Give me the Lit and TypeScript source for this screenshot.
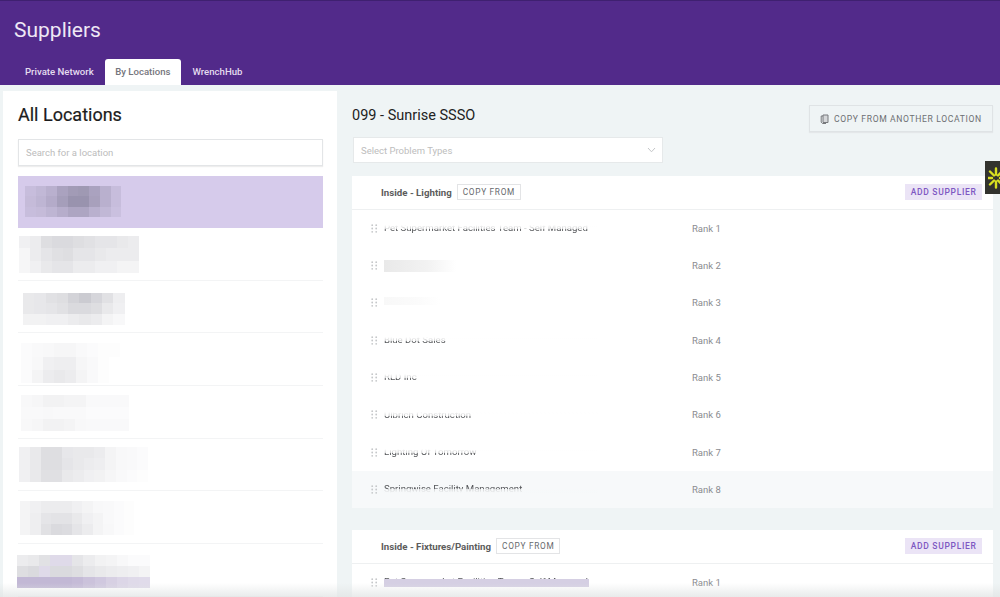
import { LitElement, html, css, svg } from "lit";
import { customElement } from "lit/decorators.js";

type Block = { left: number; top: number; cell: number; height: number; tint?: string; cells: number[][] };

const blocks: Block[] = [
  { left: 25, top: 10, cell: 10.7, height: 31, cells: [
    [.1,.14,.2,.3,.36,.38,.3,.2,.1],[.12,.16,.24,.34,.42,.42,.32,.2,.1],[.1,.12,.16,.22,.28,.28,.2,.14,.08]] },
  { left: 19, top: 8, cell: 10.9, height: 37, cells: [
    [.08,.1,.18,.2,.2,.18,.16,.14,.14,.12,.1],[.05,.1,.14,.17,.18,.14,.14,.12,.1,.1,.1],[.05,.08,.12,.14,.14,.1,.1,.08,.08,.06,.06]] },
  { left: 23, top: 12, cell: 11.3, height: 32, cells: [
    [.12,.13,.16,.18,.24,.28,.22,.16,.09],[.12,.13,.14,.16,.2,.2,.18,.12,.08],[.07,.07,.08,.08,.1,.12,.1,.06,.04]] },
  { left: 21, top: 10, cell: 11, height: 40, cells: [
    [.02,.03,.04,.05,.05,.03,.02,.01,.01],[.02,.04,.08,.09,.09,.05,.03,.01,0],[.02,.06,.1,.12,.1,.06,.03,.01,0]] },
  { left: 21, top: 9, cell: 10.8, height: 36, cells: [
    [.04,.05,.07,.07,.06,.06,.03,.03,.03,.03],[.03,.03,.04,.03,.03,.03,.02,.02,.02,.02],[.04,.05,.07,.07,.06,.04,.03,.03,.03,.03]] },
  { left: 19, top: 8, cell: 10.75, height: 35, cells: [
    [.08,.12,.18,.18,.13,.12,.12,.1,.06,.04,.03,.02],[.08,.12,.18,.18,.14,.12,.1,.09,.06,.04,.03,.02],[.08,.12,.17,.17,.12,.1,.08,.07,.05,.03,.02,.01]] },
  { left: 20, top: 10, cell: 10.4, height: 34, cells: [
    [.06,.08,.1,.1,.1,.08,.06,.04,.03,.02,.01,0],[.06,.09,.14,.15,.15,.12,.08,.06,.03,.02,.01,0],[.06,.09,.16,.2,.19,.14,.1,.06,.04,.02,.01,0]] },
  { left: 17, top: 11, cell: 11.08, height: 33, tint: "1", cells: [
    [.1,.12,.16,.22,.22,.14,.1,.07,.06,.04,.02,.02],[.18,.2,.22,.2,.2,.18,.14,.12,.1,.09,.08,.06],[.42,.42,.42,.42,.42,.4,.36,.32,.28,.24,.22,.21]] },
];

type Row = { name: string; cover?: number; under?: boolean; smear?: number; faint?: boolean; hover?: boolean; strip?: boolean };

const lighting: Row[] = [
  { name: "Pet Supermarket Facilities Team - Self Managed", cover: 1 },
  { name: "", smear: 72 },
  { name: "", smear: 56, faint: true },
  { name: "Blue Dot Sales", cover: 1 },
  { name: "RLD Inc", cover: 1 },
  { name: "Ulbrich Construction", cover: 1 },
  { name: "Lighting Of Tomorrow", cover: 1 },
  { name: "Springwise Facility Management", under: true, hover: true },
];
const fixtures: Row[] = [{ name: "Pet Supermarket Facilities Team - Self Managed", strip: true }];

const dots = svg`<circle cx="1.2" cy="1.2" r=".9"/><circle cx="5.2" cy="1.2" r=".9"/><circle cx="1.2" cy="4.5" r=".9"/><circle cx="5.2" cy="4.5" r=".9"/><circle cx="1.2" cy="7.8" r=".9"/><circle cx="5.2" cy="7.8" r=".9"/>`;

@customElement("app-root")
export class AppRoot extends LitElement {
  static styles = css`
    :host { display: block; position: relative; height: 597px; overflow: hidden; background: #eff4f5; font-family: Roboto, "Liberation Sans", sans-serif; color: #222; }
    .header { height: 85px; box-sizing: border-box; background: #522a8a; border-top: 1px solid #3f2070; display: flex; flex-direction: column; justify-content: space-between; padding-left: 14px; }
    .title { font-size: 21px; line-height: 26px; color: #eee8f5; margin-top: 16px; }
    .tabs { display: flex; }
    .tab { height: 26px; line-height: 26px; padding: 0 11px; font-size: 9.6px; font-weight: 500; color: #e4dcef; box-sizing: border-box; border-radius: 3px 3px 0 0; }
    .tab.active { background: #fff; color: #75757c; padding: 0 11px 0 10.5px; }
    .body { display: flex; height: 512px; }
    .left { width: 334px; margin: 6px 0 0 3px; background: #fff; box-sizing: border-box; padding: 0 14px 0 15px; flex: none; }
    .left h1 { margin: 12px 0 0; font-size: 18px; line-height: 24px; font-weight: 400; color: #1c1c1c; -webkit-text-stroke: .2px #1c1c1c; }
    .search { margin-top: 12px; height: 27px; box-sizing: border-box; border: 1px solid #e3e5e7; box-shadow: 0 1px 1px #eee; padding-left: 7px; font-size: 9.5px; line-height: 25px; color: #bcbcbc; background: #fff; }
    .list { margin-top: 10px; }
    .loc { height: 52.67px; box-sizing: border-box; border-bottom: 1.5px solid #f3f4f5; display: flow-root; }
    .loc.sel { background: #d6cbeb; border-bottom: 0; height: 52px; }
    .pix { display: flex; filter: blur(.5px); overflow: hidden; width: fit-content; }
    .pix-col { display: flex; flex-direction: column; flex: none; }
    .pix-cell { flex: 1; }
    .right { flex: 1; padding: 0 7px 0 15px; min-width: 0; }
    .top { display: flex; justify-content: space-between; align-items: flex-start; margin-top: 20px; height: 27px; }
    .name { font-size: 14.5px; line-height: 20px; color: #222; margin-top: 1px; }
    .copy-main { height: 27px; width: 184px; box-sizing: border-box; border: 1px solid #dfe3e5; display: flex; align-items: center; gap: 5px; padding-left: 10px; font-size: 8.6px; letter-spacing: .63px; color: #6d6f72; background: #eff4f5; box-shadow: 0 1px 1px #e4e7e9; white-space: nowrap; }
    .select { margin: 5px 0 0 1px; width: 310px; height: 26px; box-sizing: border-box; background: #fff; border: 1px solid #e6e9ea; display: flex; align-items: center; justify-content: space-between; padding: 0 6px 0 7px; font-size: 9.5px; color: #bdbdbd; }
    .card { background: #fff; margin-top: 22px; }
    .select + .card { margin-top: 13px; }
    .card-head { height: 33.6px; box-sizing: border-box; display: flex; align-items: center; padding: 0 11px 0 29px; border-bottom: 1px solid #eef0f1; }
    .cat { font-size: 9.7px; font-weight: 700; color: #5c5c5c; margin-right: 5px; }
    .copy { height: 16px; line-height: 15px; padding: 0 5px; box-sizing: border-box; border: 1px solid #e3e4e6; font-size: 8.3px; letter-spacing: .7px; color: #66686c; }
    .add { margin-left: auto; height: 16px; line-height: 16px; padding: 0 5.5px; background: #ebe4f6; color: #7e57c2; font-size: 8.5px; font-weight: 500; letter-spacing: .68px; }
    .row { height: 37.3px; display: flex; align-items: center; padding-left: 19px; }
    .row.hover { background: #f7f9fa; }
    .handle { width: 7px; height: 9px; fill: #c5c7c9; flex: none; margin-right: 6px; }
    .supplier { position: relative; width: 308px; font-size: 9.6px; color: #55575a; white-space: nowrap; height: 12px; line-height: 12px; filter: blur(.3px); }
    .cover { position: absolute; left: -1px; top: -1px; height: 8px; width: 215px; background: linear-gradient(#fff 50%, rgba(255,255,255,.65)); }
    .under { position: absolute; left: -1px; top: 6px; height: 8px; width: 215px; background: linear-gradient(rgba(247,249,250,.7), #f7f9fa 50%); }
    .smear { display: block; height: 12px; background: linear-gradient(90deg, #e9e9e9, #f2f2f2 60%, #fff); }
    .smear.faint { height: 8px; background: linear-gradient(90deg, #f8f8f8, #fbfbfb 60%, #fff); }
    .strip { position: absolute; left: 0; top: 3px; width: 205px; height: 8px; background: #d5cfe3; }
    .rank { font-size: 9.5px; color: #8a8c90; }
    .widget { position: absolute; right: 0; top: 161px; width: 15px; height: 33px; background: #33332e; overflow: hidden; }
    .widget svg { position: absolute; left: 3px; top: 6px; }
    .fade { position: absolute; left: 0; right: 0; bottom: 0; height: 14px; background: linear-gradient(rgba(225,228,228,0), rgba(225,228,228,.75)); pointer-events: none; }
  `;

  private pix(b: Block) {
    const n = b.cells[0].length;
    const cols = Array.from({ length: n }, (_, i) => i);
    return html`<div class="pix" style="margin-left:${b.left - 18}px;margin-top:${b.top}px;height:${b.height}px">
      ${cols.map((c) => html`<div class="pix-col" style="width:${b.cell}px">
        ${b.cells.map((r) => html`<div class="pix-cell" style="background:${b.tint && r[c] > 0.2 ? `rgba(110,85,155,${r[c]})` : `rgba(70,70,90,${r[c]})`}"></div>`)}
      </div>`)}
    </div>`;
  }

  private row(r: Row, i: number) {
    return html`<div class="row ${r.hover ? "hover" : ""}">
      <svg class="handle" viewBox="0 0 7 9">${dots}</svg>
      <div class="supplier">
        ${r.smear ? html`<span class="smear ${r.faint ? "faint" : ""}" style="width:${r.smear}px"></span>` : r.name}
        ${r.cover ? html`<div class="cover"></div>` : ""}
        ${r.under ? html`<div class="under"></div>` : ""}
        ${r.strip ? html`<div class="strip"></div>` : ""}
      </div>
      <div class="rank">Rank ${i + 1}</div>
    </div>`;
  }

  private card(title: string, rows: Row[]) {
    return html`<section class="card">
      <div class="card-head">
        <span class="cat">${title}</span>
        <span class="copy">COPY FROM</span>
        <span class="add">ADD SUPPLIER</span>
      </div>
      ${rows.map((r, i) => this.row(r, i))}
    </section>`;
  }

  render() {
    return html`
      <header class="header">
        <div class="title">Suppliers</div>
        <nav class="tabs">
          <div class="tab">Private Network</div>
          <div class="tab active">By Locations</div>
          <div class="tab">WrenchHub</div>
        </nav>
      </header>
      <div class="body">
        <aside class="left">
          <h1>All Locations</h1>
          <div class="search">Search for a location</div>
          <div class="list">
            ${blocks.map((b, i) => html`<div class="loc ${i === 0 ? "sel" : ""}">${this.pix(b)}</div>`)}
          </div>
        </aside>
        <main class="right">
          <div class="top">
            <div class="name">099 - Sunrise SSSO</div>
            <div class="copy-main">
              <svg width="9" height="10" viewBox="0 0 9 10" fill="none" stroke="#77797c" stroke-width="1"><path d="M3 1h5v7.5H3z" fill="#d5d7d9"/><path d="M3 2H1.2v6.2L2.5 9.5H6"/></svg>
              COPY FROM ANOTHER LOCATION
            </div>
          </div>
          <div class="select">
            <span>Select Problem Types</span>
            <svg width="9" height="6" viewBox="0 0 9 6" fill="none" stroke="#c4c6c8" stroke-width="1"><path d="M1 1l3.5 3.8L8 1"/></svg>
          </div>
          ${this.card("Inside - Lighting", lighting)}
          ${this.card("Inside - Fixtures/Painting", fixtures)}
        </main>
      </div>
      <div class="widget">
        <svg width="20" height="22" viewBox="0 0 20 22" stroke="#d9e021" stroke-width="2.4" stroke-linecap="round"><path d="M8 1.5v6M8 14.5v6M2 4.5l4 4M14 4.5l-4 4M2 17.5l4-4M14 17.5l-4-4M.5 11h3.5M12 11h3.5"/></svg>
      </div>
      <div class="fade"></div>
    `;
  }
}
